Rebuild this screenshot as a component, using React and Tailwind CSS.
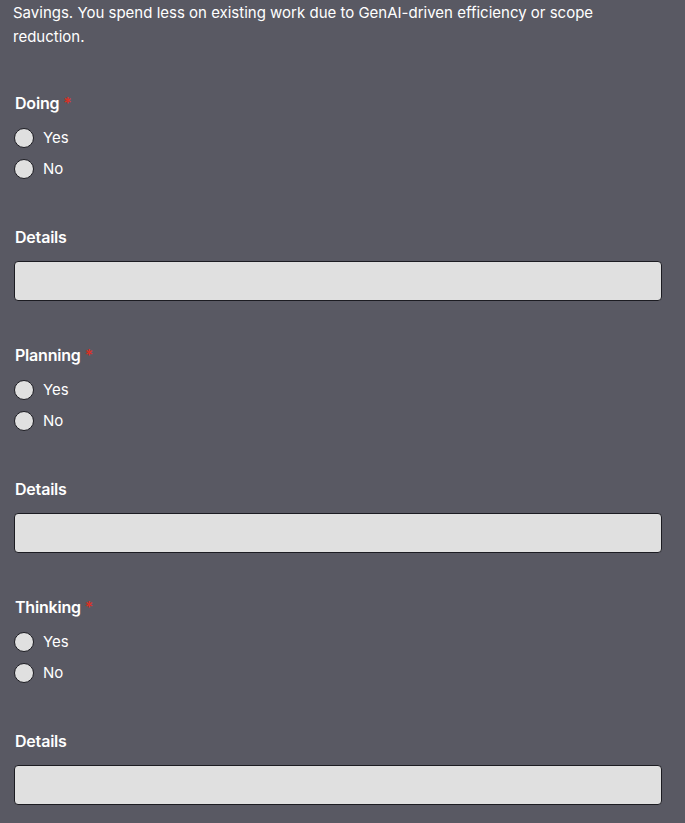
import React from "react";

function Radio({ label }) {
  return (
    <label className="flex items-center h-6 gap-[9px]">
      <span className="w-5 h-5 rounded-full bg-[#e0e0e0] border border-[#1c1c22] shrink-0 ml-[14px]" />
      <span className="text-[15px] text-white">{label}</span>
    </label>
  );
}

function Section({ title }) {
  return (
    <div className="mt-[42px]">
      <div className="h-6 leading-6 text-[16px] font-semibold tracking-[-0.2px] text-white pl-[15px]">
        {title}
        <span className="text-[#d93025] ml-1">*</span>
      </div>
      <div className="mt-[11px] flex flex-col gap-[7px]">
        <Radio label="Yes" />
        <Radio label="No" />
      </div>
      <div className="mt-[44px] h-6 leading-6 text-[16px] font-semibold tracking-[-0.2px] text-white pl-[15px]">Details</div>
      <div className="mt-[12px] ml-[14px] mr-[23px] h-10 rounded-[4px] bg-[#e0e0e0] border border-[#1c1c22]" />
    </div>
  );
}

export default function App() {
  return (
    <div className="w-[685px] h-[823px] overflow-hidden bg-[#595963]" style={{ fontFamily: "Inter, 'Liberation Sans', sans-serif" }}>
      <p className="pt-[1px] pl-[13px] pr-[60px] text-[15px] leading-6 text-white">
        Savings. You spend less on existing work due to GenAI-driven efficiency or scope reduction.
      </p>
      <Section title="Doing" />
      <Section title="Planning" />
      <Section title="Thinking" />
    </div>
  );
}
